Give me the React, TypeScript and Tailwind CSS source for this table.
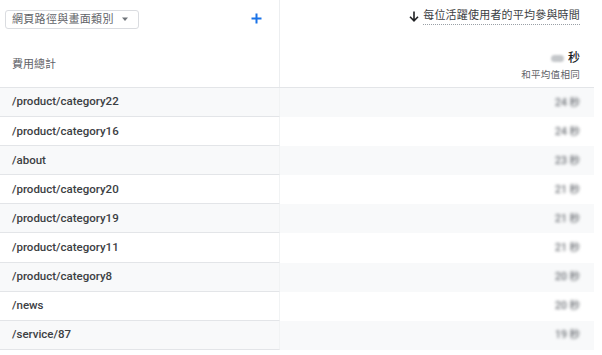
import React from 'react';

const rows = [
  { path: '/product/category22', value: '24' },
  { path: '/product/category16', value: '24' },
  { path: '/about', value: '23' },
  { path: '/product/category20', value: '21' },
  { path: '/product/category19', value: '21' },
  { path: '/product/category11', value: '21' },
  { path: '/product/category8', value: '20' },
  { path: '/news', value: '20' },
  { path: '/service/87', value: '19' },
];

const font = { fontFamily: 'Roboto, "Noto Sans CJK TC", sans-serif' };

export default function App() {
  return (
    <div className="w-[602px] h-[355px] bg-white overflow-hidden" style={font}>
      <div className="w-[594px]">
        {/* 表頭 */}
        <div className="flex h-[88px] border-b border-[#e3e5e8]">
          <div className="w-[280px] border-r border-[#eceef0] flex flex-col pl-[5px] pt-[10px] pr-[17px]">
            <div className="flex items-center justify-between">
              <button className="flex items-center h-[19px] w-[134px] border border-[#dadce0] rounded-[3px] pl-[6px] pr-[9px] justify-between">
                <span className="text-[11px] leading-none text-[#5f6368] tracking-[0.3px]">網頁路徑與畫面類別</span>
                <svg width="8" height="5" viewBox="0 0 8 5">
                  <path d="M1 0.5 L7 0.5 L4 4 Z" fill="#70757a" />
                </svg>
              </button>
              <svg width="11" height="11" viewBox="0 0 11 11" className="mt-[-2px]">
                <path d="M5.5 0.5 V10.5 M0.5 5.5 H10.5" stroke="#1a73e8" strokeWidth="2" />
              </svg>
            </div>
            <div className="mt-[28px] pl-[7px] text-[11px] leading-[16px] text-[#5f6368]">費用總計</div>
          </div>
          <div className="flex-1 flex flex-col items-end pr-[14px] pt-[8px]">
            <div className="flex items-center gap-[4px] h-[16px]">
              <svg width="10" height="11" viewBox="0 0 10 11">
                <path d="M5 0.5 V9.5 M1 5.8 L5 9.8 L9 5.8" stroke="#202124" strokeWidth="1.6" fill="none" />
              </svg>
              <span className="text-[11px] leading-[16px] text-[#3c4043] border-b border-dotted border-[#9aa0a6] tracking-[0.2px]">
                每位活躍使用者的平均參與時間
              </span>
            </div>
            <div className="mt-[26px] flex items-center h-[16px] gap-[4px]">
              <span className="w-[13px] h-[7px] rounded-full bg-[#c4c7ca] blur-[1px]" />
              <span className="text-[12px] font-medium text-[#202124]">秒</span>
            </div>
            <div className="mt-[1px] text-[9.5px] leading-[16px] text-[#5f6368] tracking-[0.3px]">和平均值相同</div>
          </div>
        </div>

        {/* 資料列 */}
        {rows.map((r, i) => (
          <div key={r.path} className={`flex h-[29.1px] ${i % 2 === 0 ? 'bg-[#f8f9fa]' : 'bg-white'}`}>
            <div className="w-[280px] border-r border-[#f1f3f4] border-b border-b-[#e3e5e8] flex items-center pl-[12px] text-[11.5px] font-medium text-[#3c4043]">
              {r.path}
            </div>
            <div className="flex-1 flex items-center justify-end pr-[14px]">
              <span className="text-[10.5px] text-[#6f7378] blur-[1.8px] font-medium">{r.value} 秒</span>
            </div>
          </div>
        ))}
      </div>
    </div>
  );
}
